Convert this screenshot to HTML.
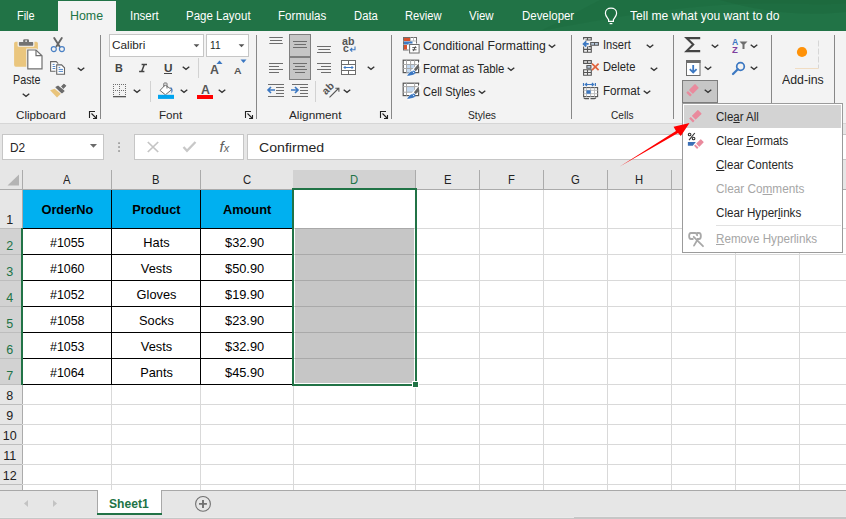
<!DOCTYPE html>
<html><head><meta charset="utf-8"><style>
html,body{margin:0;padding:0}
body{width:846px;height:519px;position:relative;overflow:hidden;background:#fff;font-family:"Liberation Sans",sans-serif}
.t{position:absolute;line-height:1;white-space:nowrap}
.r{position:absolute}
.s{position:absolute;overflow:visible}
u{text-decoration:underline;text-underline-offset:1px}
</style></head><body>
<div class="r" style="left:0px;top:0px;width:846px;height:31px;background:#217346;"></div>
<svg class="s" style="left:540px;top:0px" width="306" height="31" viewBox="0 0 306 31"><path d="M0 31 C 60 20, 120 8, 200 4 C 250 2, 290 6, 306 3 V0 H60 C 40 10, 20 22, 0 31 Z" fill="#1d6b3f" opacity="0.55"/><path d="M180 0 C 230 14, 270 16, 306 12 V0 Z" fill="#1b633a" opacity="0.4"/></svg>
<svg class="s" style="left:604px;top:7px" width="14" height="18" viewBox="0 0 14 18"><path d="M4.6 12.6 C3.2 10.6, 1.4 9, 1.4 6.2 C1.4 3.1, 3.9 1.2, 7 1.2 C10.1 1.2, 12.6 3.1, 12.6 6.2 C12.6 9, 10.8 10.6, 9.4 12.6 V14.3 H4.6 Z" fill="none" stroke="#fff" stroke-width="1.2"/><path d="M5.6 16.6 H8.4" stroke="#fff" stroke-width="1.2"/></svg>
<div class="r" style="left:58px;top:1px;width:58px;height:30px;background:#f3f3f3;"></div>
<div class="t" style="left:17.20px;top:9.62px;font-size:12.5px;color:#ffffff;font-weight:normal;transform:scaleX(0.8745);transform-origin:0 0;">File</div>
<div class="t" style="left:130.10px;top:9.62px;font-size:12.5px;color:#ffffff;font-weight:normal;transform:scaleX(0.9216);transform-origin:0 0;">Insert</div>
<div class="t" style="left:186.10px;top:9.62px;font-size:12.5px;color:#ffffff;font-weight:normal;transform:scaleX(0.9204);transform-origin:0 0;">Page Layout</div>
<div class="t" style="left:278.30px;top:9.62px;font-size:12.5px;color:#ffffff;font-weight:normal;transform:scaleX(0.9285);transform-origin:0 0;">Formulas</div>
<div class="t" style="left:354.00px;top:9.62px;font-size:12.5px;color:#ffffff;font-weight:normal;transform:scaleX(0.9002);transform-origin:0 0;">Data</div>
<div class="t" style="left:405.40px;top:9.62px;font-size:12.5px;color:#ffffff;font-weight:normal;transform:scaleX(0.8927);transform-origin:0 0;">Review</div>
<div class="t" style="left:469.30px;top:9.62px;font-size:12.5px;color:#ffffff;font-weight:normal;transform:scaleX(0.9153);transform-origin:0 0;">View</div>
<div class="t" style="left:521.50px;top:9.62px;font-size:12.5px;color:#ffffff;font-weight:normal;transform:scaleX(0.9158);transform-origin:0 0;">Developer</div>
<div class="t" style="left:70.20px;top:9.62px;font-size:12.5px;color:#217346;font-weight:normal;transform:scaleX(0.9918);transform-origin:0 0;">Home</div>
<div class="t" style="left:630.30px;top:9.52px;font-size:12.5px;color:#ffffff;font-weight:normal;transform:scaleX(0.9686);transform-origin:0 0;">Tell me what you want to do</div>
<div class="r" style="left:0px;top:31px;width:846px;height:92px;background:#f3f3f3;"></div>
<div class="r" style="left:0px;top:123px;width:846px;height:1px;background:#d6d6d6;"></div>
<div class="r" style="left:100px;top:35px;width:1px;height:84px;background:#878787;"></div>
<div class="r" style="left:256px;top:35px;width:1px;height:84px;background:#878787;"></div>
<div class="r" style="left:391px;top:35px;width:1px;height:84px;background:#878787;"></div>
<div class="r" style="left:571px;top:35px;width:1px;height:84px;background:#878787;"></div>
<div class="r" style="left:673px;top:35px;width:1px;height:84px;background:#878787;"></div>
<div class="r" style="left:771px;top:35px;width:1px;height:84px;background:#878787;"></div>
<div class="r" style="left:834px;top:35px;width:1px;height:84px;background:#878787;"></div>
<div class="t" style="left:15.60px;top:109.77px;font-size:11.5px;color:#262626;font-weight:normal;transform:scaleX(1.0118);transform-origin:0 0;">Clipboard</div>
<div class="t" style="left:158.60px;top:109.77px;font-size:11.5px;color:#262626;font-weight:normal;transform:scaleX(1.0130);transform-origin:0 0;">Font</div>
<div class="t" style="left:289.20px;top:109.77px;font-size:11.5px;color:#262626;font-weight:normal;transform:scaleX(1.0251);transform-origin:0 0;">Alignment</div>
<div class="t" style="left:467.50px;top:109.77px;font-size:11.5px;color:#262626;font-weight:normal;transform:scaleX(0.8935);transform-origin:0 0;">Styles</div>
<div class="t" style="left:610.60px;top:109.77px;font-size:11.5px;color:#262626;font-weight:normal;transform:scaleX(0.8793);transform-origin:0 0;">Cells</div>
<svg class="s" style="left:89px;top:111px" width="9" height="8" viewBox="0 0 9 8"><path d="M0.5 7 V0.5 H6" fill="none" stroke="#222" stroke-width="1.1"/><path d="M2.5 2.5 L7.5 7.5 M4 7.5 H7.5 V4" fill="none" stroke="#222" stroke-width="1.1"/></svg>
<svg class="s" style="left:245px;top:111px" width="9" height="8" viewBox="0 0 9 8"><path d="M0.5 7 V0.5 H6" fill="none" stroke="#222" stroke-width="1.1"/><path d="M2.5 2.5 L7.5 7.5 M4 7.5 H7.5 V4" fill="none" stroke="#222" stroke-width="1.1"/></svg>
<svg class="s" style="left:380px;top:111px" width="9" height="8" viewBox="0 0 9 8"><path d="M0.5 7 V0.5 H6" fill="none" stroke="#222" stroke-width="1.1"/><path d="M2.5 2.5 L7.5 7.5 M4 7.5 H7.5 V4" fill="none" stroke="#222" stroke-width="1.1"/></svg>
<svg class="s" style="left:13px;top:38px" width="31" height="33" viewBox="0 0 31 33"><rect x="1.1" y="3.8" width="23.8" height="24.9" rx="1.6" fill="#eac67e"/><rect x="4.6" y="2.6" width="16.8" height="6.2" rx="1" fill="#f3f3f3"/><rect x="5.9" y="4.1" width="14.3" height="3.6" rx="0.6" fill="#737373"/><rect x="10.2" y="1.2" width="5.8" height="3.6" rx="1.2" fill="#737373"/><circle cx="13.1" cy="3.1" r="0.9" fill="#f3f3f3"/><path d="M14.8 12 H23 L29 17.7 V30.9 H14.8 Z" fill="#fff" stroke="#f3f3f3" stroke-width="3"/><path d="M14.8 12 H23 L29 17.7 V30.9 H14.8 Z" fill="#fff" stroke="#707070" stroke-width="1.2"/><path d="M23 12 V17.7 H29" fill="none" stroke="#707070" stroke-width="1.2"/></svg>
<div class="t" style="left:12.50px;top:73.97px;font-size:12.2px;color:#262626;font-weight:normal;transform:scaleX(0.8822);transform-origin:0 0;">Paste</div>
<svg class="s" style="left:19.5px;top:90px" width="12" height="10" viewBox="0 0 12 10"><path d="M2.7 3.7 L6 6.3 L9.3 3.7" fill="none" stroke="#333" stroke-width="1.3"/></svg>
<svg class="s" style="left:50px;top:36px" width="16" height="17" viewBox="0 0 16 17"><path d="M4.2 2 L9.6 10.6 M11.8 2 L6.4 10.6" stroke="#666" stroke-width="1.9" stroke-linecap="round"/><circle cx="3.8" cy="13.1" r="2.5" fill="none" stroke="#4a80c4" stroke-width="1.2"/><circle cx="11.9" cy="13.1" r="2.5" fill="none" stroke="#4a80c4" stroke-width="1.2"/></svg>
<svg class="s" style="left:49px;top:60px" width="18" height="17" viewBox="0 0 18 17"><path d="M1.6 1.6 H7.2 L8.8 3.2 V11.2 H1.6 Z" fill="#fff" stroke="#666" stroke-width="1.1"/><path d="M3.6 4.4 H5.6 M3.6 6.5 H6.6 M3.6 8.5 H6.6" stroke="#3c78c2" stroke-width="0.9"/><path d="M7.7 4.9 H12.6 L15.5 7.8 V14.3 H7.7 Z" fill="#fff" stroke="#f3f3f3" stroke-width="2.4"/><path d="M7.7 4.9 H12.6 L15.5 7.8 V14.3 H7.7 Z" fill="#fff" stroke="#666" stroke-width="1.1"/><path d="M9.6 7.4 H11.2 M9.6 9.4 H14 M9.6 11.4 H14" stroke="#3c78c2" stroke-width="0.9"/></svg>
<svg class="s" style="left:74.5px;top:63.5px" width="12" height="10" viewBox="0 0 12 10"><path d="M2.7 3.7 L6 6.3 L9.3 3.7" fill="none" stroke="#333" stroke-width="1.3"/></svg>
<svg class="s" style="left:0px;top:0px" width="100" height="100" viewBox="0 0 100 100"><path d="M50.1 90.3 L54.6 88.8 L60.8 93.8 L57 97.4 Z" fill="#e9c47b"/><path d="M56.1 87.2 L58 86.2 L63.9 91 L61.9 92.7 Z" fill="#6b6b6b" stroke="#6b6b6b" stroke-width="1.2" stroke-linejoin="round"/><path d="M61.5 86.3 L63.9 84.1 L66 85.8 L63.3 88.6 Z" fill="#6b6b6b" stroke="#6b6b6b" stroke-width="0.8" stroke-linejoin="round"/></svg>
<div class="r" style="left:109px;top:34px;width:95px;height:23px;background:#fff;box-sizing:border-box;border:1px solid #c6c6c6"></div>
<div class="t" style="left:112.40px;top:40.37px;font-size:11.5px;color:#262626;font-weight:normal;transform:scaleX(1.0245);transform-origin:0 0;">Calibri</div>
<svg class="s" style="left:193px;top:44px" width="7" height="4" viewBox="0 0 7 4"><path d="M0.6 0.3 H6.4 L3.5 3.3 Z" fill="#555"/></svg>
<div class="r" style="left:206px;top:34px;width:43px;height:23px;background:#fff;box-sizing:border-box;border:1px solid #c6c6c6"></div>
<div class="t" style="left:209.60px;top:40.37px;font-size:11.5px;color:#262626;font-weight:normal;transform:scaleX(0.8863);transform-origin:0 0;">11</div>
<svg class="s" style="left:238px;top:44px" width="7" height="4" viewBox="0 0 7 4"><path d="M0.6 0.3 H6.4 L3.5 3.3 Z" fill="#555"/></svg>
<div class="t" style="left:115.30px;top:63.09px;font-size:11px;color:#444444;font-weight:bold;transform:scaleX(0.9848);transform-origin:0 0;">B</div>
<svg class="s" style="left:138px;top:63px" width="10" height="10" viewBox="0 0 10 10"><path d="M3.6 1.5 H9 M6.3 1.5 L3.7 8.6 M1.1 8.6 H6.4" fill="none" stroke="#444" stroke-width="1.5"/></svg>
<div class="t" style="left:163.50px;top:63.09px;font-size:11px;color:#444444;font-weight:bold;transform:scaleX(1.0732);transform-origin:0 0;">U</div>
<div class="r" style="left:163.5px;top:72.8px;width:8.5px;height:1.2px;background:#444444;"></div>
<svg class="s" style="left:179.7px;top:63.3px" width="12" height="10" viewBox="0 0 12 10"><path d="M2.7 3.7 L6 6.3 L9.3 3.7" fill="none" stroke="#333" stroke-width="1.3"/></svg>
<div class="r" style="left:198px;top:58px;width:1px;height:20px;background:#d2d2d2;"></div>
<div class="t" style="left:209.60px;top:63.62px;font-size:12.5px;color:#555;font-weight:bold;transform:scaleX(0.9889);transform-origin:0 0;">A</div>
<svg class="s" style="left:216px;top:60px" width="7" height="5" viewBox="0 0 7 5"><path d="M0.5 4 L3.5 0.5 L6.5 4 Z" fill="#3c78c2"/></svg>
<div class="t" style="left:234.00px;top:66.16px;font-size:9.5px;color:#555;font-weight:bold;transform:scaleX(1.0965);transform-origin:0 0;">A</div>
<svg class="s" style="left:240px;top:59px" width="7" height="5" viewBox="0 0 7 5"><path d="M0.5 0.5 H6.5 L3.5 4 Z" fill="#3c78c2"/></svg>
<svg class="s" style="left:112px;top:82px" width="16" height="16" viewBox="0 0 16 16"><rect x="1" y="2" width="1" height="1" fill="#6d6d6d"/><rect x="3" y="2" width="1" height="1" fill="#6d6d6d"/><rect x="5" y="2" width="1" height="1" fill="#6d6d6d"/><rect x="7" y="2" width="1" height="1" fill="#6d6d6d"/><rect x="9" y="2" width="1" height="1" fill="#6d6d6d"/><rect x="11" y="2" width="1" height="1" fill="#6d6d6d"/><rect x="13" y="2" width="1" height="1" fill="#6d6d6d"/><rect x="1" y="4" width="1" height="1" fill="#6d6d6d"/><rect x="7" y="4" width="1" height="1" fill="#6d6d6d"/><rect x="13" y="4" width="1" height="1" fill="#6d6d6d"/><rect x="1" y="6" width="1" height="1" fill="#6d6d6d"/><rect x="7" y="6" width="1" height="1" fill="#6d6d6d"/><rect x="13" y="6" width="1" height="1" fill="#6d6d6d"/><rect x="1" y="8" width="1" height="1" fill="#6d6d6d"/><rect x="3" y="8" width="1" height="1" fill="#6d6d6d"/><rect x="5" y="8" width="1" height="1" fill="#6d6d6d"/><rect x="7" y="8" width="1" height="1" fill="#6d6d6d"/><rect x="9" y="8" width="1" height="1" fill="#6d6d6d"/><rect x="11" y="8" width="1" height="1" fill="#6d6d6d"/><rect x="13" y="8" width="1" height="1" fill="#6d6d6d"/><rect x="1" y="10" width="1" height="1" fill="#6d6d6d"/><rect x="7" y="10" width="1" height="1" fill="#6d6d6d"/><rect x="13" y="10" width="1" height="1" fill="#6d6d6d"/><rect x="1" y="12" width="1" height="1" fill="#6d6d6d"/><rect x="7" y="12" width="1" height="1" fill="#6d6d6d"/><rect x="13" y="12" width="1" height="1" fill="#6d6d6d"/><rect x="1" y="14" width="13" height="1.3" fill="#555"/></svg>
<svg class="s" style="left:131.4px;top:86.3px" width="12" height="10" viewBox="0 0 12 10"><path d="M2.7 3.7 L6 6.3 L9.3 3.7" fill="none" stroke="#333" stroke-width="1.3"/></svg>
<div class="r" style="left:150px;top:81px;width:1px;height:21px;background:#d2d2d2;"></div>
<svg class="s" style="left:154px;top:80px" width="24" height="20" viewBox="0 0 24 20"><path d="M6 10.4 L11.2 5 L17.7 9.6 L11.4 14.8 Z" fill="#fff" stroke="#6d6d6d" stroke-width="1"/><path d="M9.8 6.8 V3.6 Q9.8 3 10.5 3 H12.3 Q13 3 13 3.6 V8.5" fill="none" stroke="#6d6d6d" stroke-width="1"/><path d="M16.2 7 C18.5 7.5, 19.5 10.5, 17.5 13.8 C17.2 11.5, 17.8 9.5, 16.2 7 Z" fill="#3c78c2"/><rect x="4" y="14.8" width="16" height="4.1" fill="#00a4ef"/></svg>
<svg class="s" style="left:177.5px;top:86.3px" width="12" height="10" viewBox="0 0 12 10"><path d="M2.7 3.7 L6 6.3 L9.3 3.7" fill="none" stroke="#333" stroke-width="1.3"/></svg>
<div class="t" style="left:200.70px;top:84.19px;font-size:12.3px;color:#555;font-weight:bold;transform:scaleX(1.0050);transform-origin:0 0;">A</div>
<div class="r" style="left:197px;top:95px;width:16px;height:3.5px;background:#ff0000;"></div>
<svg class="s" style="left:216.4px;top:86.3px" width="12" height="10" viewBox="0 0 12 10"><path d="M2.7 3.7 L6 6.3 L9.3 3.7" fill="none" stroke="#333" stroke-width="1.3"/></svg>
<div class="r" style="left:289px;top:34px;width:22px;height:23px;background:#c6c6c6;box-sizing:border-box;border:1px solid #7f7f7f"></div>
<div class="r" style="left:289px;top:57px;width:22px;height:23px;background:#c6c6c6;box-sizing:border-box;border:1px solid #7f7f7f"></div>
<svg class="s" style="left:0px;top:0px" width="846" height="130" viewBox="0 0 846 130"><path d="M269.3 37.5 H282.8 M270 40.5 H282 M269.3 43.5 H282.8 M293 41.5 H307 M294.3 44.5 H306.0 M293 47.5 H307 M317 46.5 H331 M318.3 49.5 H330.0 M317 52.5 H331 M269 63.5 H283 M269 66.5 H279 M269 69.5 H283 M269 72.5 H279 M293 63.5 H307 M295 66.5 H305 M293 69.5 H307 M295 72.5 H305 M317 63.5 H331 M321 66.5 H331 M317 69.5 H331 M321 72.5 H331 M268 84.5 H284 M276 87.5 H284 M276 90.5 H284 M276 93.5 H284 M268 96.5 H284 M292 84.5 H308 M300 87.5 H308 M300 90.5 H308 M300 93.5 H308 M292 96.5 H308 " stroke="#6d6d6d" stroke-width="1"/></svg>
<svg class="s" style="left:266px;top:85px" width="10" height="10" viewBox="0 0 10 10"><path d="M9 5 H2 M5 2 L2 5 L5 8" fill="none" stroke="#3c78c2" stroke-width="1.6"/></svg>
<svg class="s" style="left:290px;top:85px" width="10" height="10" viewBox="0 0 10 10"><path d="M1 5 H8 M5 2 L8 5 L5 8" fill="none" stroke="#3c78c2" stroke-width="1.6"/></svg>
<div class="t" style="left:342.40px;top:36.43px;font-size:10.6px;color:#555;font-weight:bold;transform:scaleX(1.0041);transform-origin:0 0;">ab</div>
<div class="t" style="left:342.60px;top:43.23px;font-size:10.6px;color:#555;font-weight:bold;transform:scaleX(0.9859);transform-origin:0 0;">c</div>
<svg class="s" style="left:348px;top:46px" width="9" height="7" viewBox="0 0 9 7"><path d="M7 0.5 V3.8 H2.5 M4.2 2 L2.3 3.8 L4.2 5.6" fill="none" stroke="#3c78c2" stroke-width="1.1"/></svg>
<svg class="s" style="left:340px;top:59px" width="17" height="17" viewBox="0 0 17 17"><rect x="1.5" y="1.5" width="14" height="14" fill="#fff" stroke="#6d6d6d" stroke-width="1"/><path d="M1.5 5.5 H15.5 M1.5 11.5 H15.5 M8.5 1.5 V5.5 M8.5 11.5 V15.5" stroke="#6d6d6d" stroke-width="1"/><path d="M4 8.5 H13 M5.5 7 L4 8.5 L5.5 10 M11.5 7 L13 8.5 L11.5 10" fill="none" stroke="#3c78c2" stroke-width="1"/></svg>
<svg class="s" style="left:365.3px;top:63px" width="12" height="10" viewBox="0 0 12 10"><path d="M2.7 3.7 L6 6.3 L9.3 3.7" fill="none" stroke="#333" stroke-width="1.3"/></svg>
<div class="r" style="left:315px;top:81px;width:1px;height:21px;background:#d2d2d2;"></div>
<svg class="s" style="left:321px;top:82px" width="20" height="17" viewBox="0 0 20 17"><text x="0" y="0" font-family="Liberation Sans" font-weight="bold" font-size="10.5" fill="#555" transform="translate(5.1,13.2) rotate(-45)">ab</text><path d="M8.5 15.4 L17.9 6 M14.3 6.2 H17.9 V9.8" fill="none" stroke="#555" stroke-width="1.1"/></svg>
<svg class="s" style="left:340.6px;top:86px" width="12" height="10" viewBox="0 0 12 10"><path d="M2.7 3.7 L6 6.3 L9.3 3.7" fill="none" stroke="#333" stroke-width="1.3"/></svg>
<svg class="s" style="left:402px;top:36px" width="19" height="18" viewBox="0 0 19 18"><rect x="1.5" y="1.5" width="13" height="12.5" fill="#fff" stroke="#6d6d6d" stroke-width="1"/><path d="M1.5 5 H14.5 M1.5 8.5 H14.5 M8.5 1.5 V8.5 M11.5 1.5 V5" stroke="#c0c0c0" stroke-width="1"/><rect x="2" y="2" width="6" height="3" fill="#d9512c"/><rect x="2" y="5.5" width="8.5" height="2.8" fill="#3c78c2"/><rect x="2" y="9" width="3" height="4.5" fill="#d9512c"/><rect x="6.6" y="7.5" width="11.5" height="10" fill="#f3f3f3"/><rect x="7.6" y="8.5" width="9.5" height="8.5" fill="#fff" stroke="#6d6d6d" stroke-width="1"/><path d="M10.3 11.6 H14.5 M10.3 13.8 H14.5 M13.5 10.3 L11.3 15.2" stroke="#444" stroke-width="0.9"/></svg>
<div class="t" style="left:422.60px;top:40.02px;font-size:12.5px;color:#262626;font-weight:normal;transform:scaleX(0.9765);transform-origin:0 0;">Conditional Formatting</div>
<svg class="s" style="left:546.1px;top:40.7px" width="12" height="10" viewBox="0 0 12 10"><path d="M2.7 3.7 L6 6.3 L9.3 3.7" fill="none" stroke="#333" stroke-width="1.3"/></svg>
<svg class="s" style="left:400px;top:57px" width="22" height="22" viewBox="0 0 22 22"><rect x="3.2" y="3.2" width="15.4" height="12.4" fill="#fff" stroke="#555" stroke-width="1.2"/><rect x="6.5" y="7.5" width="8.1" height="8.1" fill="#c4d9f0"/><path d="M3.2 7.5 H18.6 M3.2 11.5 H18.6 M6.5 3.2 V15.6 M10.6 3.2 V15.6 M14.6 3.2 V15.6" stroke="#a9a9a9" stroke-width="1"/><path d="M20 4 L7 18 L9 21 L21 8 Z" fill="#fff"/><path d="M18.8 6.2 L19 10.6 L15.8 14.2 L13.9 12.3 Z" fill="#666"/><path d="M7 18.8 C 8.8 15.4, 11.8 13.2, 14.2 13.4 C 15.4 14.3, 15.9 15.6, 15.2 16.7 C 12.5 18.2, 9.6 18.8, 7 18.8 Z" fill="#3c78c2"/><path d="M12.8 14.6 L14.2 16.2" stroke="#fff" stroke-width="0.9"/></svg>
<div class="t" style="left:422.60px;top:62.52px;font-size:12.5px;color:#262626;font-weight:normal;transform:scaleX(0.9108);transform-origin:0 0;">Format as Table</div>
<svg class="s" style="left:504.6px;top:63.5px" width="12" height="10" viewBox="0 0 12 10"><path d="M2.7 3.7 L6 6.3 L9.3 3.7" fill="none" stroke="#333" stroke-width="1.3"/></svg>
<svg class="s" style="left:400px;top:80px" width="22" height="22" viewBox="0 0 22 22"><rect x="3.2" y="3.2" width="15.4" height="12.4" fill="#fff" stroke="#555" stroke-width="1.2"/><rect x="6.5" y="6.6" width="8.1" height="5.6" fill="#c4d9f0"/><path d="M3.2 6.6 H18.6 M3.2 12.2 H18.6 M6.5 3.2 V15.6 M14.6 3.2 V15.6" stroke="#a9a9a9" stroke-width="1"/><path d="M20 4 L7 18 L9 21 L21 8 Z" fill="#fff"/><path d="M18.8 6.2 L19 10.6 L15.8 14.2 L13.9 12.3 Z" fill="#666"/><path d="M7 18.8 C 8.8 15.4, 11.8 13.2, 14.2 13.4 C 15.4 14.3, 15.9 15.6, 15.2 16.7 C 12.5 18.2, 9.6 18.8, 7 18.8 Z" fill="#3c78c2"/><path d="M12.8 14.6 L14.2 16.2" stroke="#fff" stroke-width="0.9"/></svg>
<div class="t" style="left:422.60px;top:85.62px;font-size:12.5px;color:#262626;font-weight:normal;transform:scaleX(0.8855);transform-origin:0 0;">Cell Styles</div>
<svg class="s" style="left:475.6px;top:86.5px" width="12" height="10" viewBox="0 0 12 10"><path d="M2.7 3.7 L6 6.3 L9.3 3.7" fill="none" stroke="#333" stroke-width="1.3"/></svg>
<svg class="s" style="left:580px;top:35px" width="22" height="20" viewBox="0 0 22 20"><path d="M3.6 4.5 V2.6 H11.3 V5 H5.5 M7.5 2.6 V5" fill="none" stroke="#555" stroke-width="1.1"/><path d="M3.6 11.6 V17.2 H11.3 V11.6 H8.5 M3.6 14.4 H11.3 M7.5 11.6 V17.2" fill="none" stroke="#555" stroke-width="1.1"/><rect x="10.7" y="7.6" width="7.7" height="2.6" fill="#c9def5" stroke="#555" stroke-width="1.1"/><path d="M14.5 7.6 V10.2" stroke="#555" stroke-width="1"/><path d="M8.7 8.9 H3.8 M6.3 6.3 L3.6 8.9 L6.3 11.5" fill="none" stroke="#3c78c2" stroke-width="1.8"/></svg>
<div class="t" style="left:602.60px;top:38.82px;font-size:12.5px;color:#262626;font-weight:normal;transform:scaleX(0.8896);transform-origin:0 0;">Insert</div>
<svg class="s" style="left:643.6px;top:40.5px" width="12" height="10" viewBox="0 0 12 10"><path d="M2.7 3.7 L6 6.3 L9.3 3.7" fill="none" stroke="#333" stroke-width="1.3"/></svg>
<svg class="s" style="left:580px;top:58px" width="22" height="20" viewBox="0 0 22 20"><path d="M3.6 2.6 H11.3 V5.4 H3.6 Z M7.5 2.6 V5.4" fill="none" stroke="#555" stroke-width="1.1"/><path d="M3.6 17.2 H11.3 V11.7 H3.6 Z M3.6 14.5 H11.3 M7.5 11.7 V17.2" fill="none" stroke="#555" stroke-width="1.1"/><rect x="6.9" y="7.6" width="4" height="2.6" fill="#c9def5" stroke="#555" stroke-width="1.1"/><path d="M12 5.6 L18.6 12.1 M18.6 5.6 L12 12.1" stroke="#e0633c" stroke-width="1.7"/></svg>
<div class="t" style="left:602.60px;top:61.42px;font-size:12.5px;color:#262626;font-weight:normal;transform:scaleX(0.8969);transform-origin:0 0;">Delete</div>
<svg class="s" style="left:647.8px;top:63.5px" width="12" height="10" viewBox="0 0 12 10"><path d="M2.7 3.7 L6 6.3 L9.3 3.7" fill="none" stroke="#333" stroke-width="1.3"/></svg>
<svg class="s" style="left:580px;top:81px" width="22" height="20" viewBox="0 0 22 20"><path d="M3.5 2 V4.9 M15.4 2 V4.9 M5.3 3.5 H13.6 M7 2 L5.3 3.5 L7 5 M11.9 2 L13.6 3.5 L11.9 5" fill="none" stroke="#3c78c2" stroke-width="1.2"/><rect x="3.6" y="6.6" width="14" height="9" fill="#fff" stroke="#555" stroke-width="1.1"/><path d="M6.5 6.6 V15.6 M10.6 6.6 V15.6 M14.5 6.6 V15.6 M3.6 9.3 H17.6 M3.6 12.7 H17.6" stroke="#bdbdbd" stroke-width="1"/><rect x="6.5" y="9.3" width="4.1" height="3.4" fill="#3c78c2"/><path d="M4 16.5 Q4 17.6 5 17.6 H9 M10.5 17.6 H14.5 Q15.5 17.6 16 16.5" fill="none" stroke="#555" stroke-width="1.1"/></svg>
<div class="t" style="left:602.60px;top:84.52px;font-size:12.5px;color:#262626;font-weight:normal;transform:scaleX(0.9327);transform-origin:0 0;">Format</div>
<svg class="s" style="left:640.8px;top:86.5px" width="12" height="10" viewBox="0 0 12 10"><path d="M2.7 3.7 L6 6.3 L9.3 3.7" fill="none" stroke="#333" stroke-width="1.3"/></svg>
<svg class="s" style="left:684px;top:36px" width="18" height="18" viewBox="0 0 18 18"><path d="M16.2 2.1 H2.6 L9.2 8.6 L2.6 15.1 H16.2" fill="none" stroke="#444" stroke-width="2.1" stroke-linejoin="miter"/></svg>
<svg class="s" style="left:709.4px;top:40.5px" width="12" height="10" viewBox="0 0 12 10"><path d="M2.7 3.7 L6 6.3 L9.3 3.7" fill="none" stroke="#333" stroke-width="1.3"/></svg>
<div class="t" style="left:732.00px;top:37.60px;font-size:8.5px;color:#3c78c2;font-weight:bold;transform:scaleX(1.0131);transform-origin:0 0;">A</div>
<div class="t" style="left:732.20px;top:46.30px;font-size:8.5px;color:#7e3f9d;font-weight:bold;transform:scaleX(1.1186);transform-origin:0 0;">Z</div>
<svg class="s" style="left:739px;top:41px" width="10" height="9" viewBox="0 0 10 9"><path d="M0.5 0.5 H8.5 L5.5 3.5 V8 H3.5 V3.5 Z" fill="#6d6d6d"/></svg>
<svg class="s" style="left:748.2px;top:40.5px" width="12" height="10" viewBox="0 0 12 10"><path d="M2.7 3.7 L6 6.3 L9.3 3.7" fill="none" stroke="#333" stroke-width="1.3"/></svg>
<svg class="s" style="left:685px;top:59px" width="17" height="18" viewBox="0 0 17 18"><rect x="1.5" y="1.5" width="13.5" height="15" fill="#fff" stroke="#6d6d6d" stroke-width="1"/><rect x="1" y="1" width="14.5" height="3" fill="#6d6d6d"/><path d="M8.2 6 V13.5 M4.8 10.2 L8.2 13.6 L11.6 10.2" fill="none" stroke="#3c78c2" stroke-width="1.8"/></svg>
<svg class="s" style="left:702.3px;top:63.400000000000006px" width="12" height="10" viewBox="0 0 12 10"><path d="M2.7 3.7 L6 6.3 L9.3 3.7" fill="none" stroke="#333" stroke-width="1.3"/></svg>
<svg class="s" style="left:731px;top:61px" width="16" height="15" viewBox="0 0 16 15"><circle cx="9.5" cy="5.5" r="3.8" fill="none" stroke="#3c78c2" stroke-width="1.7"/><path d="M6.8 8.2 L2 13" stroke="#3c78c2" stroke-width="2.2" stroke-linecap="round"/></svg>
<svg class="s" style="left:748.2px;top:63.400000000000006px" width="12" height="10" viewBox="0 0 12 10"><path d="M2.7 3.7 L6 6.3 L9.3 3.7" fill="none" stroke="#333" stroke-width="1.3"/></svg>
<div class="r" style="left:682px;top:80px;width:36px;height:23px;background:#c6c6c6;box-sizing:border-box;border:1px solid #7d7d7d"></div>
<svg class="s" style="left:0px;top:0px" width="846" height="260" viewBox="0 0 846 260"><g transform="rotate(-45)"><rect x="423.5" y="550.8" width="8.6" height="5.5" rx="0.6" fill="#e98a9d"/><rect x="419.70000000000005" y="550.8" width="2.4" height="5.5" rx="0.4" fill="#e98a9d"/></g></svg>
<svg class="s" style="left:702.3px;top:86.4px" width="12" height="10" viewBox="0 0 12 10"><path d="M2.7 3.7 L6 6.3 L9.3 3.7" fill="none" stroke="#333" stroke-width="1.3"/></svg>
<svg class="s" style="left:786px;top:36px" width="36" height="36" viewBox="0 0 36 36"><circle cx="16" cy="16" r="5.1" fill="#ff9208"/><path d="M32.5 4.5 V32.5" stroke="#d6d6d6" stroke-width="1" stroke-dasharray="6 2"/><path d="M9 32.5 H32.5" stroke="#f0dcc2" stroke-width="1"/></svg>
<div class="t" style="left:782.30px;top:73.82px;font-size:12.5px;color:#262626;font-weight:normal;transform:scaleX(0.9841);transform-origin:0 0;">Add-ins</div>
<div class="r" style="left:0px;top:124px;width:846px;height:46px;background:#e6e6e6;"></div>
<div class="r" style="left:2px;top:134px;width:102px;height:26px;background:#ffffff;box-sizing:border-box;border:1px solid #c6c6c6"></div>
<div class="t" style="left:9.90px;top:142.09px;font-size:12.3px;color:#262626;font-weight:normal;transform:scaleX(0.9654);transform-origin:0 0;">D2</div>
<svg class="s" style="left:88px;top:143px" width="10" height="6" viewBox="0 0 10 6"><path d="M1.9 0.9 H9 L5.45 4.8 Z" fill="#6a6a6a"/></svg>
<svg class="s" style="left:117px;top:142px" width="4" height="12" viewBox="0 0 4 12"><rect x="1.2" y="0.3" width="1.7" height="1.7" fill="#999"/><rect x="1.2" y="4.2" width="1.7" height="1.7" fill="#999"/><rect x="1.2" y="8.2" width="1.7" height="1.7" fill="#999"/></svg>
<div class="r" style="left:134px;top:134px;width:110px;height:26px;background:#ffffff;box-sizing:border-box;border:1px solid #c6c6c6"></div>
<svg class="s" style="left:146px;top:141px" width="14" height="12" viewBox="0 0 14 12"><path d="M1.8 1 L12.2 11 M12.2 1 L1.8 11" stroke="#c4c4c4" stroke-width="1.7"/></svg>
<svg class="s" style="left:182px;top:140px" width="15" height="13" viewBox="0 0 15 13"><path d="M1.5 7 L5 10.8 L13.5 2" fill="none" stroke="#c8c8c8" stroke-width="2.3"/></svg>
<div class="t" style="left:219.50px;top:138.70px;font-size:15px;color:#606060;font-weight:normal;font-family:"Liberation Serif",serif;-webkit-text-stroke:0.3px #606060"><i>f</i><span style='font-size:11px'><i>x</i></span></div>
<div class="r" style="left:247px;top:134px;width:600px;height:26px;background:#ffffff;box-sizing:border-box;border:1px solid #c6c6c6"></div>
<div class="t" style="left:259.20px;top:142.32px;font-size:12.5px;color:#262626;font-weight:normal;transform:scaleX(1.1285);transform-origin:0 0;">Confirmed</div>
<div class="r" style="left:0px;top:170px;width:846px;height:320px;background:#ffffff;"></div>
<div class="r" style="left:0px;top:170px;width:846px;height:19px;background:#e6e6e6;"></div>
<div class="r" style="left:0px;top:170px;width:22px;height:320px;background:#e6e6e6;"></div>
<div class="r" style="left:111px;top:170px;width:1px;height:19px;background:#ababab;"></div>
<div class="r" style="left:200px;top:170px;width:1px;height:19px;background:#ababab;"></div>
<div class="r" style="left:293px;top:170px;width:1px;height:19px;background:#ababab;"></div>
<div class="r" style="left:415px;top:170px;width:1px;height:19px;background:#ababab;"></div>
<div class="r" style="left:479px;top:170px;width:1px;height:19px;background:#ababab;"></div>
<div class="r" style="left:543px;top:170px;width:1px;height:19px;background:#ababab;"></div>
<div class="r" style="left:607px;top:170px;width:1px;height:19px;background:#ababab;"></div>
<div class="r" style="left:671px;top:170px;width:1px;height:19px;background:#ababab;"></div>
<div class="r" style="left:735px;top:170px;width:1px;height:19px;background:#ababab;"></div>
<div class="r" style="left:799px;top:170px;width:1px;height:19px;background:#ababab;"></div>
<div class="r" style="left:863px;top:170px;width:1px;height:19px;background:#ababab;"></div>
<div class="r" style="left:0px;top:189px;width:846px;height:1px;background:#ababab;"></div>
<div class="r" style="left:22px;top:170px;width:1px;height:320px;background:#ababab;"></div>
<div class="r" style="left:293px;top:170px;width:122px;height:19px;background:#d2d2d2;"></div>
<div class="t" style="left:63.23px;top:174.22px;font-size:12.5px;color:#222;font-weight:normal;transform:scaleX(0.9000);transform-origin:0 0;">A</div>
<div class="t" style="left:152.26px;top:174.22px;font-size:12.5px;color:#222;font-weight:normal;transform:scaleX(0.9000);transform-origin:0 0;">B</div>
<div class="t" style="left:242.95px;top:174.22px;font-size:12.5px;color:#222;font-weight:normal;transform:scaleX(0.9000);transform-origin:0 0;">C</div>
<div class="t" style="left:350.45px;top:174.22px;font-size:12.5px;color:#217346;font-weight:normal;transform:scaleX(0.9000);transform-origin:0 0;">D</div>
<div class="t" style="left:443.76px;top:174.22px;font-size:12.5px;color:#222;font-weight:normal;transform:scaleX(0.9000);transform-origin:0 0;">E</div>
<div class="t" style="left:508.07px;top:174.22px;font-size:12.5px;color:#222;font-weight:normal;transform:scaleX(0.9000);transform-origin:0 0;">F</div>
<div class="t" style="left:571.11px;top:174.22px;font-size:12.5px;color:#222;font-weight:normal;transform:scaleX(0.9000);transform-origin:0 0;">G</div>
<div class="t" style="left:635.45px;top:174.22px;font-size:12.5px;color:#222;font-weight:normal;transform:scaleX(0.9000);transform-origin:0 0;">H</div>
<div class="t" style="left:701.92px;top:174.22px;font-size:12.5px;color:#222;font-weight:normal;transform:scaleX(0.9000);transform-origin:0 0;">I</div>
<div class="t" style="left:764.69px;top:174.22px;font-size:12.5px;color:#222;font-weight:normal;transform:scaleX(0.9000);transform-origin:0 0;">J</div>
<div class="t" style="left:827.76px;top:174.22px;font-size:12.5px;color:#222;font-weight:normal;transform:scaleX(0.9000);transform-origin:0 0;">K</div>
<svg class="s" style="left:6px;top:174px" width="14" height="14" viewBox="0 0 14 14"><path d="M13 0.5 V11.5 H1.5 Z" fill="#b4b4b4"/></svg>
<div class="r" style="left:22px;top:228px;width:824px;height:1px;background:#d9d9d9;"></div>
<div class="r" style="left:22px;top:254px;width:824px;height:1px;background:#d9d9d9;"></div>
<div class="r" style="left:22px;top:280px;width:824px;height:1px;background:#d9d9d9;"></div>
<div class="r" style="left:22px;top:306px;width:824px;height:1px;background:#d9d9d9;"></div>
<div class="r" style="left:22px;top:332px;width:824px;height:1px;background:#d9d9d9;"></div>
<div class="r" style="left:22px;top:358px;width:824px;height:1px;background:#d9d9d9;"></div>
<div class="r" style="left:22px;top:384px;width:824px;height:1px;background:#d9d9d9;"></div>
<div class="r" style="left:22px;top:404px;width:824px;height:1px;background:#d9d9d9;"></div>
<div class="r" style="left:22px;top:424px;width:824px;height:1px;background:#d9d9d9;"></div>
<div class="r" style="left:22px;top:444px;width:824px;height:1px;background:#d9d9d9;"></div>
<div class="r" style="left:22px;top:464px;width:824px;height:1px;background:#d9d9d9;"></div>
<div class="r" style="left:22px;top:484px;width:824px;height:1px;background:#d9d9d9;"></div>
<div class="r" style="left:22px;top:504px;width:824px;height:1px;background:#d9d9d9;"></div>
<div class="r" style="left:111px;top:190px;width:1px;height:300px;background:#d9d9d9;"></div>
<div class="r" style="left:200px;top:190px;width:1px;height:300px;background:#d9d9d9;"></div>
<div class="r" style="left:293px;top:190px;width:1px;height:300px;background:#d9d9d9;"></div>
<div class="r" style="left:415px;top:190px;width:1px;height:300px;background:#d9d9d9;"></div>
<div class="r" style="left:479px;top:190px;width:1px;height:300px;background:#d9d9d9;"></div>
<div class="r" style="left:543px;top:190px;width:1px;height:300px;background:#d9d9d9;"></div>
<div class="r" style="left:607px;top:190px;width:1px;height:300px;background:#d9d9d9;"></div>
<div class="r" style="left:671px;top:190px;width:1px;height:300px;background:#d9d9d9;"></div>
<div class="r" style="left:735px;top:190px;width:1px;height:300px;background:#d9d9d9;"></div>
<div class="r" style="left:799px;top:190px;width:1px;height:300px;background:#d9d9d9;"></div>
<div class="r" style="left:863px;top:190px;width:1px;height:300px;background:#d9d9d9;"></div>
<div class="r" style="left:0px;top:228px;width:22px;height:1px;background:#bdbdbd;"></div>
<div class="r" style="left:0px;top:254px;width:22px;height:1px;background:#bdbdbd;"></div>
<div class="r" style="left:0px;top:280px;width:22px;height:1px;background:#bdbdbd;"></div>
<div class="r" style="left:0px;top:306px;width:22px;height:1px;background:#bdbdbd;"></div>
<div class="r" style="left:0px;top:332px;width:22px;height:1px;background:#bdbdbd;"></div>
<div class="r" style="left:0px;top:358px;width:22px;height:1px;background:#bdbdbd;"></div>
<div class="r" style="left:0px;top:384px;width:22px;height:1px;background:#bdbdbd;"></div>
<div class="r" style="left:0px;top:404px;width:22px;height:1px;background:#bdbdbd;"></div>
<div class="r" style="left:0px;top:424px;width:22px;height:1px;background:#bdbdbd;"></div>
<div class="r" style="left:0px;top:444px;width:22px;height:1px;background:#bdbdbd;"></div>
<div class="r" style="left:0px;top:464px;width:22px;height:1px;background:#bdbdbd;"></div>
<div class="r" style="left:0px;top:484px;width:22px;height:1px;background:#bdbdbd;"></div>
<div class="r" style="left:0px;top:229px;width:22px;height:25px;background:#d2d2d2;"></div>
<div class="r" style="left:0px;top:255px;width:22px;height:25px;background:#d2d2d2;"></div>
<div class="r" style="left:0px;top:281px;width:22px;height:25px;background:#d2d2d2;"></div>
<div class="r" style="left:0px;top:307px;width:22px;height:25px;background:#d2d2d2;"></div>
<div class="r" style="left:0px;top:333px;width:22px;height:25px;background:#d2d2d2;"></div>
<div class="r" style="left:0px;top:359px;width:22px;height:25px;background:#d2d2d2;"></div>
<div class="t" style="left:6.33px;top:214.42px;font-size:12.5px;color:#222;font-weight:normal;transform:scaleX(1.0000);transform-origin:0 0;">1</div>
<div class="t" style="left:6.33px;top:240.42px;font-size:12.5px;color:#217346;font-weight:normal;transform:scaleX(1.0000);transform-origin:0 0;">2</div>
<div class="t" style="left:6.33px;top:266.42px;font-size:12.5px;color:#217346;font-weight:normal;transform:scaleX(1.0000);transform-origin:0 0;">3</div>
<div class="t" style="left:6.33px;top:292.42px;font-size:12.5px;color:#217346;font-weight:normal;transform:scaleX(1.0000);transform-origin:0 0;">4</div>
<div class="t" style="left:6.33px;top:318.42px;font-size:12.5px;color:#217346;font-weight:normal;transform:scaleX(1.0000);transform-origin:0 0;">5</div>
<div class="t" style="left:6.33px;top:344.42px;font-size:12.5px;color:#217346;font-weight:normal;transform:scaleX(1.0000);transform-origin:0 0;">6</div>
<div class="t" style="left:6.33px;top:370.42px;font-size:12.5px;color:#217346;font-weight:normal;transform:scaleX(1.0000);transform-origin:0 0;">7</div>
<div class="t" style="left:6.33px;top:390.42px;font-size:12.5px;color:#222;font-weight:normal;transform:scaleX(1.0000);transform-origin:0 0;">8</div>
<div class="t" style="left:6.33px;top:410.42px;font-size:12.5px;color:#222;font-weight:normal;transform:scaleX(1.0000);transform-origin:0 0;">9</div>
<div class="t" style="left:2.86px;top:430.42px;font-size:12.5px;color:#222;font-weight:normal;transform:scaleX(1.0000);transform-origin:0 0;">10</div>
<div class="t" style="left:3.30px;top:450.42px;font-size:12.5px;color:#222;font-weight:normal;transform:scaleX(1.0000);transform-origin:0 0;">11</div>
<div class="t" style="left:2.86px;top:470.42px;font-size:12.5px;color:#222;font-weight:normal;transform:scaleX(1.0000);transform-origin:0 0;">12</div>
<div class="r" style="left:21px;top:228px;width:2px;height:157px;background:#217346;"></div>
<div class="r" style="left:23px;top:190px;width:270px;height:38px;background:#00b0f0;"></div>
<div class="r" style="left:23px;top:228px;width:270px;height:1px;background:#000;"></div>
<div class="r" style="left:23px;top:254px;width:270px;height:1px;background:#000;"></div>
<div class="r" style="left:23px;top:280px;width:270px;height:1px;background:#000;"></div>
<div class="r" style="left:23px;top:306px;width:270px;height:1px;background:#000;"></div>
<div class="r" style="left:23px;top:332px;width:270px;height:1px;background:#000;"></div>
<div class="r" style="left:23px;top:358px;width:270px;height:1px;background:#000;"></div>
<div class="r" style="left:23px;top:384px;width:270px;height:1px;background:#000;"></div>
<div class="r" style="left:111px;top:190px;width:1px;height:195px;background:#000;"></div>
<div class="r" style="left:200px;top:190px;width:1px;height:195px;background:#000;"></div>
<div class="t" style="left:41.45px;top:203.86px;font-size:12.8px;color:#000;font-weight:bold;transform:scaleX(1.0000);transform-origin:0 0;">OrderNo</div>
<div class="t" style="left:132.21px;top:203.86px;font-size:12.8px;color:#000;font-weight:bold;transform:scaleX(1.0000);transform-origin:0 0;">Product</div>
<div class="t" style="left:222.94px;top:203.86px;font-size:12.8px;color:#000;font-weight:bold;transform:scaleX(1.0000);transform-origin:0 0;">Amount</div>
<div class="t" style="left:50.24px;top:237.36px;font-size:12.8px;color:#000;font-weight:normal;transform:scaleX(0.9700);transform-origin:0 0;">#1055</div>
<div class="t" style="left:143.35px;top:237.36px;font-size:12.8px;color:#000;font-weight:normal;transform:scaleX(1.0000);transform-origin:0 0;">Hats</div>
<div class="t" style="left:225.02px;top:237.36px;font-size:12.8px;color:#000;font-weight:normal;transform:scaleX(1.0000);transform-origin:0 0;">$32.90</div>
<div class="t" style="left:50.24px;top:263.36px;font-size:12.8px;color:#000;font-weight:normal;transform:scaleX(0.9700);transform-origin:0 0;">#1060</div>
<div class="t" style="left:140.85px;top:263.36px;font-size:12.8px;color:#000;font-weight:normal;transform:scaleX(1.0000);transform-origin:0 0;">Vests</div>
<div class="t" style="left:225.02px;top:263.36px;font-size:12.8px;color:#000;font-weight:normal;transform:scaleX(1.0000);transform-origin:0 0;">$50.90</div>
<div class="t" style="left:50.24px;top:289.36px;font-size:12.8px;color:#000;font-weight:normal;transform:scaleX(0.9700);transform-origin:0 0;">#1052</div>
<div class="t" style="left:136.60px;top:289.36px;font-size:12.8px;color:#000;font-weight:normal;transform:scaleX(1.0000);transform-origin:0 0;">Gloves</div>
<div class="t" style="left:225.02px;top:289.36px;font-size:12.8px;color:#000;font-weight:normal;transform:scaleX(1.0000);transform-origin:0 0;">$19.90</div>
<div class="t" style="left:50.24px;top:315.36px;font-size:12.8px;color:#000;font-weight:normal;transform:scaleX(0.9700);transform-origin:0 0;">#1058</div>
<div class="t" style="left:139.06px;top:315.36px;font-size:12.8px;color:#000;font-weight:normal;transform:scaleX(1.0000);transform-origin:0 0;">Socks</div>
<div class="t" style="left:225.02px;top:315.36px;font-size:12.8px;color:#000;font-weight:normal;transform:scaleX(1.0000);transform-origin:0 0;">$23.90</div>
<div class="t" style="left:50.24px;top:341.36px;font-size:12.8px;color:#000;font-weight:normal;transform:scaleX(0.9700);transform-origin:0 0;">#1053</div>
<div class="t" style="left:140.85px;top:341.36px;font-size:12.8px;color:#000;font-weight:normal;transform:scaleX(1.0000);transform-origin:0 0;">Vests</div>
<div class="t" style="left:225.02px;top:341.36px;font-size:12.8px;color:#000;font-weight:normal;transform:scaleX(1.0000);transform-origin:0 0;">$32.90</div>
<div class="t" style="left:50.24px;top:367.36px;font-size:12.8px;color:#000;font-weight:normal;transform:scaleX(0.9700);transform-origin:0 0;">#1064</div>
<div class="t" style="left:140.15px;top:367.36px;font-size:12.8px;color:#000;font-weight:normal;transform:scaleX(1.0000);transform-origin:0 0;">Pants</div>
<div class="t" style="left:225.02px;top:367.36px;font-size:12.8px;color:#000;font-weight:normal;transform:scaleX(1.0000);transform-origin:0 0;">$45.90</div>
<div class="r" style="left:295px;top:228px;width:119px;height:155px;background:#c6c6c6;"></div>
<div class="r" style="left:295px;top:228px;width:119px;height:1px;background:#a9a9a9;"></div>
<div class="r" style="left:295px;top:254px;width:119px;height:1px;background:#a9a9a9;"></div>
<div class="r" style="left:295px;top:280px;width:119px;height:1px;background:#a9a9a9;"></div>
<div class="r" style="left:295px;top:306px;width:119px;height:1px;background:#a9a9a9;"></div>
<div class="r" style="left:295px;top:332px;width:119px;height:1px;background:#a9a9a9;"></div>
<div class="r" style="left:295px;top:358px;width:119px;height:1px;background:#a9a9a9;"></div>
<div class="r" style="left:292px;top:188px;width:125px;height:198px;background:transparent;box-sizing:border-box;border:2px solid #217346"></div>
<div class="r" style="left:413px;top:382px;width:5px;height:5px;background:#217346;box-shadow:0 0 0 1px #fff"></div>
<div class="r" style="left:0px;top:490px;width:846px;height:29px;background:#e6e6e6;"></div>
<div class="r" style="left:0px;top:490px;width:846px;height:1px;background:#a8a8a8;"></div>
<div class="r" style="left:97px;top:490px;width:65px;height:25px;background:#ffffff;"></div>
<div class="r" style="left:97px;top:490px;width:1px;height:25px;background:#a8a8a8;"></div>
<div class="r" style="left:161px;top:490px;width:1px;height:25px;background:#a8a8a8;"></div>
<div class="r" style="left:97px;top:513px;width:65px;height:2px;background:#217346;"></div>
<div class="t" style="left:109.10px;top:497.99px;font-size:12.3px;color:#217346;font-weight:bold;transform:scaleX(0.9840);transform-origin:0 0;">Sheet1</div>
<svg class="s" style="left:23px;top:498px" width="8" height="10" viewBox="0 0 8 10"><path d="M5 2 L1 5.5 L5 9 Z" fill="#c3c3c3"/></svg>
<svg class="s" style="left:51px;top:498px" width="8" height="10" viewBox="0 0 8 10"><path d="M2 2 L6 5.5 L2 9 Z" fill="#c3c3c3"/></svg>
<svg class="s" style="left:194px;top:495px" width="18" height="18" viewBox="0 0 18 18"><circle cx="9" cy="8.9" r="7.4" fill="none" stroke="#707070" stroke-width="1.1"/><path d="M9 5 V12.9 M5 8.9 H12.9" stroke="#707070" stroke-width="1.9"/></svg>
<div class="r" style="left:0px;top:517px;width:574px;height:1px;background:#e9e9e9;"></div>
<div class="r" style="left:0px;top:518px;width:574px;height:1px;background:#c6c6c6;"></div>
<div class="r" style="left:574px;top:516px;width:272px;height:1px;background:#e9e9e9;"></div>
<div class="r" style="left:574px;top:517px;width:272px;height:2px;background:#c6c6c6;"></div>
<div class="r" style="left:682px;top:103px;width:161px;height:150px;background:#ffffff;box-sizing:border-box;border:1px solid #9b9b9b"></div>
<div class="r" style="left:684px;top:105px;width:157px;height:23px;background:#d3d3d3;"></div>
<div class="t" style="left:716.30px;top:110.82px;font-size:12.5px;color:#262626;font-weight:normal;transform:scaleX(0.9213);transform-origin:0 0;">Cle<u>a</u>r All</div>
<div class="t" style="left:716.30px;top:134.82px;font-size:12.5px;color:#262626;font-weight:normal;transform:scaleX(0.9118);transform-origin:0 0;">Clear <u>F</u>ormats</div>
<div class="t" style="left:716.30px;top:158.52px;font-size:12.5px;color:#262626;font-weight:normal;transform:scaleX(0.9271);transform-origin:0 0;"><u>C</u>lear Contents</div>
<div class="t" style="left:716.30px;top:182.72px;font-size:12.5px;color:#a6a6a6;font-weight:normal;transform:scaleX(0.9429);transform-origin:0 0;">Clear Co<u>m</u>ments</div>
<div class="t" style="left:716.30px;top:206.52px;font-size:12.5px;color:#262626;font-weight:normal;transform:scaleX(0.9292);transform-origin:0 0;">Clear Hyper<u>l</u>inks</div>
<div class="t" style="left:716.30px;top:232.62px;font-size:12.5px;color:#a6a6a6;font-weight:normal;transform:scaleX(0.9329);transform-origin:0 0;"><u>R</u>emove Hyperlinks</div>
<svg class="s" style="left:0px;top:0px" width="846" height="260" viewBox="0 0 846 260"><g transform="rotate(-45)"><rect x="407.2" y="571.1" width="8.6" height="5.5" rx="0.6" fill="#e98a9d"/><rect x="403.40000000000003" y="571.1" width="2.4" height="5.5" rx="0.4" fill="#e98a9d"/></g></svg>
<svg class="s" style="left:686px;top:131px" width="12" height="11" viewBox="0 0 12 11"><circle cx="3.6" cy="3.5" r="1.3" fill="none" stroke="#333" stroke-width="1.1"/><circle cx="7.6" cy="7.5" r="1.3" fill="none" stroke="#333" stroke-width="1.1"/><path d="M8.8 2 L3 9.2" stroke="#333" stroke-width="1.1"/></svg>
<svg class="s" style="left:687px;top:141px" width="10" height="6" viewBox="0 0 10 6"><path d="M0.9 1 H8.8 L5.8 4.8 H0.9 Z" fill="#3b6fb6"/></svg>
<svg class="s" style="left:0px;top:0px" width="846" height="260" viewBox="0 0 846 260"><g transform="rotate(-45)"><rect x="390.6" y="593.8" width="6.6" height="4.5" rx="0.6" fill="#e98a9d"/><rect x="387.6" y="593.8" width="2.0" height="4.5" rx="0.4" fill="#e98a9d"/></g></svg>
<svg class="s" style="left:686px;top:230px" width="20" height="20" viewBox="0 0 20 20"><path d="M7.5 9 H5 C2.5 9, 2.5 3, 5 3 H9 C10.5 3, 11.5 4.5, 11 6" fill="none" stroke="#a8a8a8" stroke-width="1.8"/><path d="M10.5 3 H13 C15.5 3, 15.5 9, 13 9 H11" fill="none" stroke="#a8a8a8" stroke-width="1.8"/><path d="M7.7 6.8 L17 16.2 M11.6 9.5 L8 15.6" fill="none" stroke="#a8a8a8" stroke-width="1.8" stroke-linecap="round"/></svg>
<div class="r" style="left:716px;top:225px;width:125px;height:1px;background:#e1e1e1;"></div>
<svg class="s" style="left:600px;top:100px" width="110" height="80" viewBox="0 0 110 80"><path d="M19.4 66.8 L76 31 L73.6 26.7 L89.5 23.1 L80.8 36.1 L78 33 Z" fill="#ff0000"/></svg>
</body></html>
